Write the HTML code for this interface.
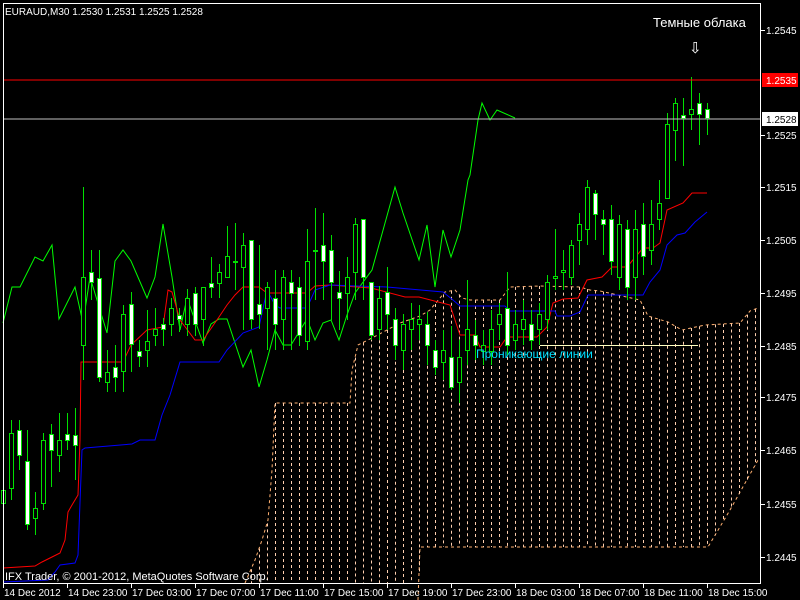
<!DOCTYPE html>
<html><head><meta charset="utf-8"><style>
html,body{margin:0;padding:0;background:#000;width:800px;height:600px;overflow:hidden}
svg{display:block}
text{font-family:"Liberation Sans","DejaVu Sans",sans-serif;font-size:10px;fill:#fff}
</style></head><body>
<svg id="s" width="800" height="600" xmlns="http://www.w3.org/2000/svg">
<rect width="800" height="600" fill="#000"/>
<g id="cloud"></g>
<g id="lines"></g>
<g id="candles"></g>
<line x1="3" y1="80" x2="760" y2="80" stroke="#f00"/>
<line x1="3" y1="119" x2="760" y2="119" stroke="#c0c0c0"/>
<line x1="540" y1="345.5" x2="698" y2="345.5" stroke="#ffffc0"/>
<rect x="3.5" y="3.5" width="757" height="580" fill="none" stroke="#fff"/>
<rect x="762" y="73" width="36" height="14" fill="#f00"/>
<rect x="762" y="112" width="36" height="14" fill="#fff"/>
<g id="axis"></g>
<text x="5" y="15">EURAUD,M30  1.2530 1.2531 1.2525 1.2528</text>
<text x="653" y="27" style="font-size:13px">Темные облака</text>
<text x="689" y="53" style="font-size:15px">⇩</text>
<text x="476" y="358" style="font-size:12px;fill:#00e0ff">Проникающие линии</text>
<text x="5" y="580" style="font-size:11px">IFX Trader, © 2001-2012, MetaQuotes Software Corp.</text>
</svg>
<script>
var NS="http://www.w3.org/2000/svg";
function el(p,t,a,txt){var e=document.createElementNS(NS,t);for(var k in a)e.setAttribute(k,a[k]);if(txt)e.textContent=txt;document.getElementById(p).appendChild(e);return e;}
function pl(p,pts,c,extra){var a={points:pts.map(function(q){return q.join(',')}).join(' '),fill:'none',stroke:c,'stroke-width':1};for(var k in extra)a[k]=extra[k];el(p,'polyline',a);}
var C=[[3,490,503,400,520,0],[11,433,488,420,500,0],[19,430,455,420,470,1],[27,461,524,430,530,1],[35,508,518,492,535,0],[43,440,503,433,510,0],[51,434,450,424,487,1],[59,440,455,413,472,0],[67,434,440,413,450,1],[75,435,445,408,480,1],
[83,277,345,187,380,0],[91,272,282,250,300,1],[99,278,377,250,382,1],[107,372,382,350,392,0],[115,367,377,345,392,1],[123,314,371,305,392,0],[131,304,344,292,372,1],[139,351,356,340,367,1],[147,341,350,310,367,0],[155,329,335,308,346,0],[163,324,329,318,346,1],[171,308,324,298,336,0],[179,315,319,308,332,1],[187,298,324,289,336,0],[195,293,324,287,336,1],[203,287,319,287,346,0],[211,283,287,257,298,1],[219,272,283,264,298,0],[227,256,277,226,277,0],[235,261,262,223,290,0],[243,245,267,233,330,0],[251,240,319,240,329,1],[259,304,314,245,329,1],[267,287,308,282,350,0],[275,298,324,270,350,1],[283,277,319,270,350,0],[291,282,293,270,350,1],[299,287,335,277,346,1],[307,261,341,229,350,0],[315,250,251,208,300,1],[323,245,261,213,300,1],[331,250,282,235,320,1],[339,292,298,271,330,1],[347,277,293,257,320,0],[355,224,272,218,300,0],[363,219,277,219,300,1],
[371,282,335,282,340,1],[379,298,329,286,340,0],[387,292,314,267,330,1],[395,319,345,308,360,1],[403,324,350,314,370,0],[411,319,329,303,350,0],[419,319,324,305,340,0],[427,324,345,312,365,1],[435,350,367,340,375,1],[443,350,362,330,380,0],[451,357,387,326,390,1],[459,357,382,340,403,0],[467,329,350,280,365,0],[475,335,345,320,360,1],[483,345,351,330,365,0],[491,329,351,310,365,0],[499,314,324,303,340,0],[507,308,345,272,355,1],[515,324,340,310,350,0],[523,319,329,300,345,0],[531,324,340,310,350,1],[539,314,329,303,345,0],[547,282,319,275,330,0],[555,276,278,229,290,0],[563,270,272,250,290,0],[571,245,277,240,285,0],[579,224,240,213,265,0],[587,187,229,180,245,0],[595,193,214,190,240,1],[603,219,224,210,255,1],[611,219,261,205,275,1],[619,224,277,215,290,0],[627,229,287,220,300,1],[635,229,277,210,300,0],[643,224,256,203,275,1],[651,224,250,200,265,0],[659,203,219,180,230,0],[667,124,198,113,198,0],[675,103,130,98,161,0],[683,115,118,98,166,1],[691,109,114,77,130,0],[699,103,114,93,145,1],[707,109,118,103,135,1]];
C.forEach(function(c){var x=c[0]+0.5;el('candles','line',{x1:x,y1:c[3],x2:x,y2:c[4],stroke:'#00e000'});
var h=Math.max(1,c[2]-c[1]);el('candles','rect',{x:c[0]-1.5,y:c[1]+0.5,width:4,height:h,fill:c[5]?'#fff':'#000',stroke:'#00e000'});});
pl('lines',[[3,323],[12,287],[20,287],[35,257],[43,261],[52,245],[59,319],[75,287],[83,323],[90,277],[107,333],[115,261],[123,250],[131,261],[147,298],[155,277],[163,224],[172,277],[180,330],[187,298],[203,343],[211,324],[219,319],[227,319],[243,367],[251,350],[259,387],[267,360],[275,330],[283,345],[291,345],[307,319],[315,340],[323,323],[331,320],[339,340],[347,315],[355,293],[372,270],[395,187],[403,213],[419,260],[427,225],[435,287],[443,230],[451,257],[460,230],[468,180],[470,175],[478,120],[482,103],[490,120],[497,110],[515,118]],'#00ff00');
pl('lines',[[3,568],[35,566],[42,562],[50,558],[60,553],[65,540],[68,512],[72,505],[78,495],[80,440],[81,362],[123,362],[131,345],[147,330],[163,327],[168,290],[172,292],[180,320],[195,340],[203,340],[219,317],[227,305],[235,295],[243,287],[259,287],[267,293],[307,293],[315,286],[330,285],[371,288],[405,297],[419,297],[450,305],[460,335],[475,335],[480,347],[500,347],[507,337],[537,337],[547,327],[553,303],[563,299],[578,298],[587,280],[602,277],[612,267],[627,267],[643,248],[653,248],[660,243],[667,210],[683,203],[692,193],[707,193]],'#ff0000');
pl('lines',[[3,582],[48,580],[55,572],[60,565],[75,563],[78,555],[82,450],[85,448],[132,444],[140,440],[155,440],[162,415],[170,395],[180,362],[219,362],[227,350],[243,333],[259,327],[267,290],[275,305],[280,308],[307,308],[315,290],[330,285],[387,287],[443,292],[453,300],[460,306],[505,306],[510,311],[555,311],[557,316],[570,316],[580,312],[588,295],[643,295],[650,282],[660,270],[667,245],[677,235],[685,233],[695,222],[707,212]],'#0000ff');
var T=[[245,583],[255,560],[262,540],[268,520],[272,470],[275,403],[350,403],[352,370],[358,345],[372,338],[387,330],[400,323],[420,316],[430,310],[445,292],[455,290],[462,298],[470,300],[500,300],[510,287],[540,286],[580,287],[590,290],[600,291],[640,300],[648,316],[668,322],[682,330],[705,325],[740,323],[750,311],[758,308]];
var B=[[245,600],[418,600],[420,547],[708,547],[730,510],[758,460]];
function ip(L,x){for(var i=0;i<L.length-1;i++){if(x>=L[i][0]&&x<=L[i+1][0]){var t=(x-L[i][0])/(L[i+1][0]-L[i][0]||1);return L[i][1]+t*(L[i+1][1]-L[i][1]);}}return L[L.length-1][1];}
var dash={'stroke-dasharray':'3,3'};
pl('cloud',T,'#ffb070',dash);
pl('cloud',B.slice(1),'#ffb070',dash);
for(var x=251;x<=758;x+=8){var t=ip(T,x),b=Math.min(583,ip(B,x));if(b-t>2)el('cloud','line',{x1:x+0.5,y1:t,x2:x+0.5,y2:b,stroke:'#ffd0b0','stroke-dasharray':'3,3'});}
var P=[['1.2545',30],['1.2525',135],['1.2515',187],['1.2505',240],['1.2495',293],['1.2485',346],['1.2475',397],['1.2465',450],['1.2455',504],['1.2445',557]];
P.forEach(function(p){el('axis','line',{x1:761,y1:p[1]+0.5,x2:765,y2:p[1]+0.5,stroke:'#fff'});el('axis','text',{x:766,y:p[1]+4},p[0]);});
el('axis','text',{x:766,y:84,style:'fill:#fff'},'1.2535');
el('axis','text',{x:766,y:123,style:'fill:#000'},'1.2528');
var D=[[3,'14 Dec 2012'],[67,'14 Dec 23:00'],[131,'17 Dec 03:00'],[195,'17 Dec 07:00'],[259,'17 Dec 11:00'],[323,'17 Dec 15:00'],[387,'17 Dec 19:00'],[451,'17 Dec 23:00'],[515,'18 Dec 03:00'],[579,'18 Dec 07:00'],[643,'18 Dec 11:00'],[707,'18 Dec 15:00']];
D.forEach(function(d){el('axis','line',{x1:d[0]+0.5,y1:584,x2:d[0]+0.5,y2:588,stroke:'#fff'});el('axis','text',{x:d[0]+1,y:596},d[1]);});
</script>
</body></html>
